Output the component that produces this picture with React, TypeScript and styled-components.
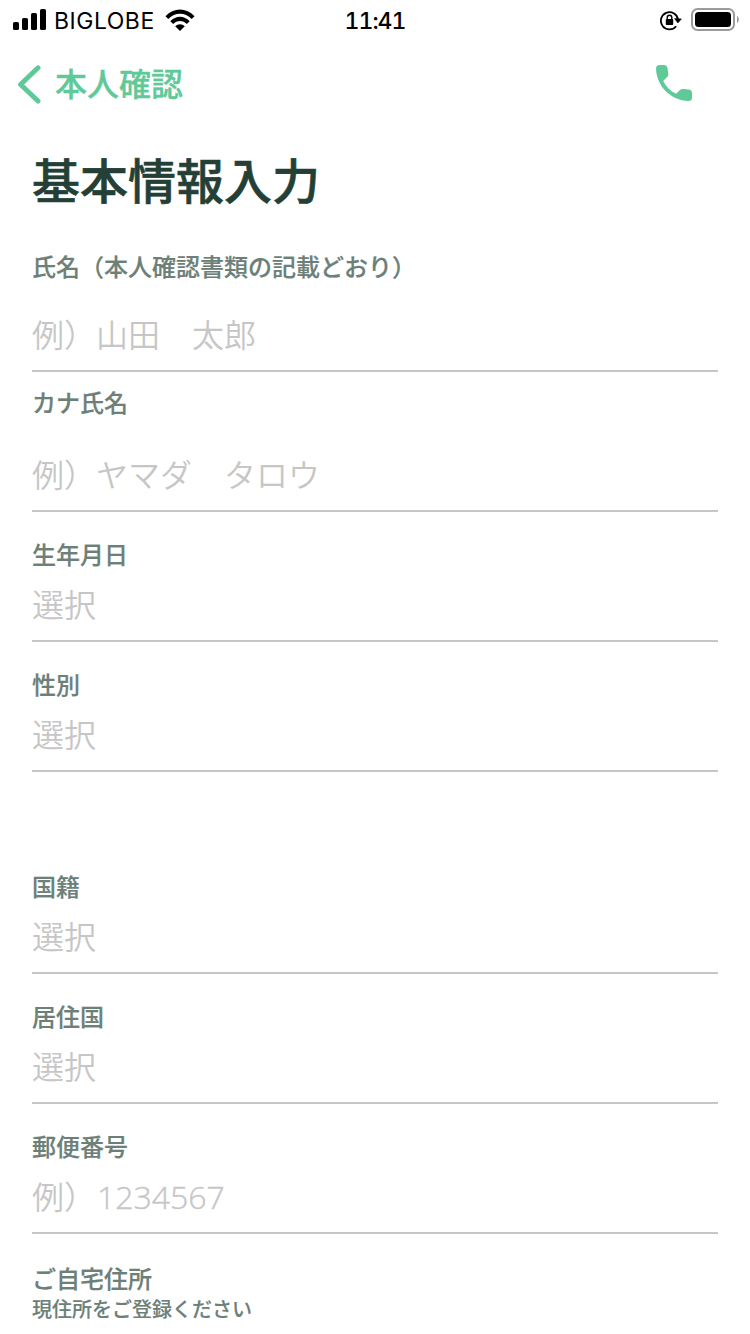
import React from "react";
import styled, { createGlobalStyle } from "styled-components";

const GlobalStyle = createGlobalStyle`
  * { box-sizing: border-box; }
  body {
    margin: 0;
    background: #fff;
    font-family: "Noto Sans CJK JP", sans-serif;
    overflow: hidden;
  }
`;

const Screen = styled.div`
  width: 750px;
  height: 1334px;
  overflow: hidden;
  background: #fff;
`;

const StatusBar = styled.header`
  display: grid;
  grid-template-columns: 1fr auto 1fr;
  align-items: center;
  height: 40px;
  padding: 0 11px 0 13px;
  color: #000;
  font-family: Inter, sans-serif;
`;

const StatusGroup = styled.div<{ $end?: boolean }>`
  display: flex;
  align-items: center;
  justify-content: ${(p) => (p.$end ? "flex-end" : "flex-start")};
  gap: ${(p) => (p.$end ? 9 : 0)}px;
  margin-right: ${(p) => (p.$end ? -1 : 0)}px;
  svg { display: block; flex: none; }
`;

const Carrier = styled.span`
  margin: 0 10px 0 7px;
  font-size: 23px;
  letter-spacing: 0.5px;
  line-height: 38px;
  padding-top: 2px;
`;

const Clock = styled.span`
  padding-top: 2px;
  margin-right: 2px;
  font-size: 23px;
  font-weight: 520;
  font-variant-numeric: tabular-nums;
  letter-spacing: -1px;
  line-height: 38px;
`;

const NavBar = styled.nav`
  display: flex;
  align-items: flex-start;
  justify-content: space-between;
  height: 88px;
  padding: 20px 58px 0 16px;
  color: #5fc998;
  svg { display: block; }
`;

const BackButton = styled.button`
  display: flex;
  align-items: flex-start;
  gap: 14px;
  padding: 0;
  border: 0;
  background: none;
  color: inherit;
  font: 500 32px/48px "Noto Sans CJK JP", sans-serif;
  -webkit-text-stroke: 0.3px currentColor;
  svg { margin-top: 4px; }
`;

const IconButton = styled.button`
  padding: 5px 0 0;
  border: 0;
  background: none;
  color: inherit;
`;

const BackLabel = styled.span`
  margin-top: -2px;
`;

const Form = styled.main`
  padding: 14px 32px 0;
`;

const Title = styled.h1`
  margin: 0 0 34px;
  color: #243f36;
  font-size: 48px;
  font-weight: 500;
  line-height: 72px;
  -webkit-text-stroke: 0.6px currentColor;
`;

const Field = styled.div<{ $top?: number; $gap?: number }>`
  display: flex;
  flex-direction: column;
  gap: ${(p) => p.$gap ?? 7}px;
  padding: ${(p) => p.$top ?? 24}px 0 13px;
  border-bottom: 2px solid #c6c6c6;
`;

const Label = styled.span`
  color: #6c8078;
  font-size: 24px;
  font-weight: 500;
  line-height: 36px;
  white-space: nowrap;
  -webkit-text-stroke: 0.2px currentColor;
`;

const Placeholder = styled.span`
  height: 48px;
  color: #c6c6c6;
  font-size: 32px;
  font-weight: 350;
  line-height: 48px;
  white-space: pre;
`;

const Digits = styled.span`
  margin-left: 1px;
  font-family: "Open Sans", sans-serif;
  font-weight: 300;
  line-height: 1;
  -webkit-text-stroke: 0.4px currentColor;
`;

const Section = styled.section`
  & + & { margin-top: 72px; }
`;

const Address = styled.div`
  display: flex;
  flex-direction: column;
  padding-top: 26px;
`;

const Note = styled.span`
  margin-top: -2px;
  color: #6c8078;
  font-size: 20px;
  font-weight: 500;
  line-height: 30px;
  -webkit-text-stroke: 0.15px currentColor;
`;

const Signal = () => (
  <svg width="34" height="22" viewBox="0 0 34 22">
    <rect x="0" y="13" width="6" height="8" rx="1.6" />
    <rect x="9" y="9" width="6" height="12" rx="1.6" />
    <rect x="18" y="4" width="6" height="17" rx="1.6" />
    <rect x="27" y="0" width="6" height="21" rx="1.6" />
  </svg>
);

const Wifi = () => (
  <svg width="30" height="22" viewBox="0 0 30 22">
    <path d="M0.5 7.2C8.5 -1.8 21.5 -1.8 29.5 7.2L26.7 10C20.2 3 9.8 3 3.3 10Z" />
    <path d="M5.3 12.2C10.8 6.2 19.2 6.2 24.7 12.2L21.8 15C18 11 12 11 8.2 15Z" />
    <path d="M10.2 17.2C12.8 14.5 17.2 14.5 19.8 17.2L15 22Z" />
  </svg>
);

const RotationLock = () => (
  <svg width="22" height="22" viewBox="0 0 22 22">
    <path d="M16.2 17.2A8.6 8.6 0 1 1 18 10.5" fill="none" stroke="#000" strokeWidth="1.8" />
    <path d="M14.6 9.6L21.4 9.9L17.8 14Z" stroke="#000" strokeWidth="0.6" strokeLinejoin="round" />
    <rect x="5.8" y="10" width="7.4" height="6" rx="0.8" />
    <path d="M7.2 10.5V8.5A2.3 2.3 0 0 1 11.8 8.5V10.5" fill="none" stroke="#000" strokeWidth="1.4" />
  </svg>
);

const Battery = () => (
  <svg width="49" height="24" viewBox="0 0 49 24">
    <rect x="1" y="1" width="42" height="21" rx="5.5" fill="none" stroke="#9b9b9b" strokeWidth="2" />
    <rect x="4" y="4" width="36" height="15" rx="3.5" />
    <path d="M46 8C48.4 9 48.4 14 46 15Z" fill="#9b9b9b" />
  </svg>
);

const Chevron = () => (
  <svg width="25" height="40" viewBox="0 0 25 40">
    <path d="M22 3.8L4.6 20.5L22 37" fill="none" stroke="currentColor" strokeWidth="5" strokeLinecap="round" strokeLinejoin="round" />
  </svg>
);

const Phone = () => (
  <svg width="36" height="36" viewBox="0 0 36 36" fill="currentColor">
    <path d="M0 3.5C0 1.2 1.3 0 3.5 0H7.5C10 0 11.2 1.1 11.5 3.3L12.3 8.4C12.5 10 12.2 11 11.2 12L7.2 16C10 21.5 14.3 26 20 28.8L24 25.1C25 24.2 26 23.8 27.4 24L32.8 24.6C35 24.9 36 26 36 28.3V32.7C36 35 34.8 36 32.5 36C14.6 35.3 0.6 21.3 0 3.5Z" />
  </svg>
);

export default function App() {
  return (
    <>
      <GlobalStyle />
      <Screen>
        <StatusBar>
          <StatusGroup>
            <Signal />
            <Carrier>BIGLOBE</Carrier>
            <Wifi />
          </StatusGroup>
          <Clock>11:41</Clock>
          <StatusGroup $end>
            <RotationLock />
            <Battery />
          </StatusGroup>
        </StatusBar>
        <NavBar>
          <BackButton>
            <Chevron />
            <BackLabel>本人確認</BackLabel>
          </BackButton>
          <IconButton aria-label="電話">
            <Phone />
          </IconButton>
        </NavBar>
        <Form>
          <Title>基本情報入力</Title>
          <Section>
            <Field $top={0} $gap={25}>
              <Label>氏名（本人確認書類の記載どおり）</Label>
              <Placeholder>例）山田　太郎</Placeholder>
            </Field>
            <Field $top={12} $gap={29}>
              <Label>カナ氏名</Label>
              <Placeholder>例）ヤマダ　タロウ</Placeholder>
            </Field>
            <Field>
              <Label>生年月日</Label>
              <Placeholder>選択</Placeholder>
            </Field>
            <Field>
              <Label>性別</Label>
              <Placeholder>選択</Placeholder>
            </Field>
          </Section>
          <Section>
            <Field>
              <Label>国籍</Label>
              <Placeholder>選択</Placeholder>
            </Field>
            <Field>
              <Label>居住国</Label>
              <Placeholder>選択</Placeholder>
            </Field>
            <Field>
              <Label>郵便番号</Label>
              <Placeholder>
                例）<Digits>1234567</Digits>
              </Placeholder>
            </Field>
            <Address>
              <Label>ご自宅住所</Label>
              <Note>現住所をご登録ください</Note>
            </Address>
          </Section>
        </Form>
      </Screen>
    </>
  );
}
